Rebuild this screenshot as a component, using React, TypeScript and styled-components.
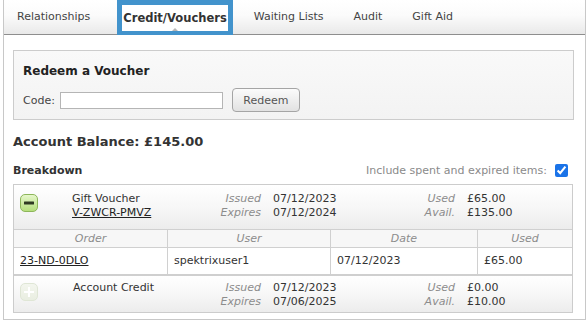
import React from "react";
import styled, { createGlobalStyle } from "styled-components";

const Global = createGlobalStyle`
  html, body { margin: 0; padding: 0; background: #fff; }
  body { font-family: "DejaVu Sans", Verdana, sans-serif; font-size: 11px; color: #333; }
  * { box-sizing: border-box; }
`;

const Frame = styled.div`
  margin-left: 3px;
  width: 583px;
  height: 320px;
  border-left: 1px solid #c8c8c8;
  border-right: 1px solid #c8c8c8;
  border-bottom: 1px solid #c8c8c8;
  overflow: hidden;
`;

const TabBar = styled.div`
  display: flex;
  align-items: stretch;
  height: 35px;
  padding-bottom: 1px;
  background: linear-gradient(#ffffff 0%, #fbfbfb 45%, #e9e9e9 100%);
  border-bottom: 1px solid #8e8e8e;
`;

const Tab = styled.div<{ $active?: boolean; $pad?: number }>`
  display: flex;
  align-items: center;
  padding: ${(p) => (p.$active ? "0 1px" : `0 ${p.$pad ?? 13}px`)};
  margin: ${(p) => (p.$active ? "0 7px -2px 14px" : "0")};
  font-weight: ${(p) => (p.$active ? "bold" : "normal")};
  font-size: ${(p) => (p.$active ? "11.5px" : "11px")};
  color: ${(p) => (p.$active ? "#333" : "#444")};
  position: relative;
  white-space: nowrap;
  ${(p) =>
    p.$active &&
    `
    background: #fff;
    border: 5px solid #4293cc;
    border-bottom-width: 4px;
    padding-bottom: 1px;
  `}
`;

const Caret = styled.span`
  position: absolute;
  left: 50%;
  bottom: 0px;
  transform: translateX(-50%);
  width: 0;
  height: 0;
  border-left: 3px solid transparent;
  border-right: 3px solid transparent;
  border-bottom: 3px solid #b5b5b5;
`;

const Content = styled.div`
  padding: 15px 11px 0 9px;
  display: flex;
  flex-direction: column;
`;

const RedeemBox = styled.div`
  border: 1px solid #cccccc;
  background: linear-gradient(#f9f9f9, #f3f3f3);
  height: 70px;
  padding: 12px 9px 0 9px;
  display: flex;
  flex-direction: column;
  gap: 9px;
`;

const BoxTitle = styled.div`
  font-weight: bold;
  font-size: 12px;
  color: #222;
  line-height: 16px;
`;

const CodeRow = styled.div`
  display: flex;
  align-items: center;
  color: #444;
`;

const CodeInput = styled.input`
  margin: 0 0 0 5px;
  width: 163px;
  height: 17px;
  border: 1px solid #b5b5b5;
  background: #fff;
  padding: 0 3px;
`;

const Button = styled.button`
  margin-left: 9px;
  width: 68px;
  height: 24px;
  border: 1px solid #a5a5a5;
  border-radius: 4px;
  background: linear-gradient(#fbfbfb, #e2e2e2);
  font-family: "DejaVu Sans", Verdana, sans-serif;
  font-size: 11px;
  color: #555;
  padding: 0;
`;

const Balance = styled.div`
  margin-top: 14px;
  font-size: 13px;
  font-weight: bold;
  color: #333;
  line-height: 16px;
`;

const BreakdownRow = styled.div`
  margin-top: 13px;
  display: flex;
  justify-content: space-between;
  align-items: center;
  height: 14px;
`;

const SubTitle = styled.div`
  font-weight: bold;
  font-size: 11px;
  color: #333;
`;

const Include = styled.label`
  display: flex;
  align-items: center;
  gap: 8px;
  color: #8a8a8a;
  padding-right: 6px;
`;

const Check = styled.input`
  margin: 0;
  width: 13px;
  height: 13px;
  accent-color: #1a73e8;
`;

const Table = styled.div`
  margin-top: 7px;
  border: 1px solid #cccccc;
  width: 560px;
`;

const ItemRow = styled.div<{ $h: number }>`
  display: grid;
  grid-template-columns: 58px 120px 69px 110px 84px 1fr;
  height: ${(p) => p.$h}px;
  padding-top: ${(p) => (p.$h > 40 ? 7 : 5)}px;
  background: linear-gradient(#ffffff 0%, #f7f7f7 50%, #ececec 100%);
  line-height: 14px;
`;

const IconCell = styled.div<{ $top?: number }>`
  padding: ${(p) => p.$top ?? 2}px 0 0 6px;
`;

const Stack = styled.div<{ $right?: boolean; $pad?: number }>`
  display: flex;
  flex-direction: column;
  align-items: ${(p) => (p.$right ? "flex-end" : "flex-start")};
  padding-left: ${(p) => p.$pad ?? 0}px;
  white-space: nowrap;
`;

const Label = styled.span`
  font-style: italic;
  color: #8c8c8c;
`;

const Value = styled.span`
  color: #333;
`;

const LinkText = styled.span`
  color: #222;
  text-decoration: underline;
`;

const ToggleBox = styled.div<{ $faded?: boolean }>`
  width: 18px;
  height: 18px;
  border-radius: 5px;
  border: 1px solid ${(p) => (p.$faded ? "#dfe6d5" : "#8db65a")};
  background: ${(p) =>
    p.$faded ? "linear-gradient(#f3f6ee, #e9eee1)" : "linear-gradient(#e6f7cb, #b5df7c)"};
  display: flex;
  align-items: center;
  justify-content: center;
`;

const SubTable = styled.div`
  display: grid;
  grid-template-columns: 154px 163px 147px 1fr;
  border-top: 1px solid #d0d0d0;
  border-bottom: 2px solid #cfcfcf;
`;

const HeadCell = styled.div<{ $last?: boolean }>`
  height: 18px;
  display: flex;
  align-items: center;
  justify-content: center;
  font-style: italic;
  color: #8c8c8c;
  background: #f7f7f7;
  border-right: ${(p) => (p.$last ? "none" : "1px solid #d0d0d0")};
  border-bottom: 1px solid #d0d0d0;
`;

const DataCell = styled.div<{ $last?: boolean }>`
  height: 26px;
  display: flex;
  align-items: center;
  padding: 0 0 2px 6px;
  color: #333;
  background: #fff;
  border-right: ${(p) => (p.$last ? "none" : "1px solid #d0d0d0")};
`;

const Minus = () => (
  <ToggleBox>
    <svg width="10" height="4" viewBox="0 0 10 4">
      <rect x="0" y="0.5" width="10" height="3" rx="0.5" fill="#2f3a22" />
    </svg>
  </ToggleBox>
);

const Plus = () => (
  <ToggleBox $faded>
    <svg width="10" height="10" viewBox="0 0 10 10">
      <rect x="0" y="4" width="10" height="2" fill="#ffffff" />
      <rect x="4" y="0" width="2" height="10" fill="#ffffff" />
    </svg>
  </ToggleBox>
);

const tabs: { t: string; pad?: number }[] = [
  { t: "Relationships" },
  { t: "Credit/Vouchers" },
  { t: "Waiting Lists", pad: 14 },
  { t: "Audit", pad: 16 },
  { t: "Gift Aid", pad: 14 },
];

export default function App() {
  return (
    <>
      <Global />
      <Frame>
        <TabBar>
          {tabs.map(({ t, pad }) => (
            <Tab key={t} $active={t === "Credit/Vouchers"} $pad={pad}>
              {t}
              {t === "Credit/Vouchers" && <Caret />}
            </Tab>
          ))}
        </TabBar>
        <Content>
          <RedeemBox>
            <BoxTitle>Redeem a Voucher</BoxTitle>
            <CodeRow>
              Code:
              <CodeInput type="text" />
              <Button>Redeem</Button>
            </CodeRow>
          </RedeemBox>
          <Balance>Account Balance: £145.00</Balance>
          <BreakdownRow>
            <SubTitle>Breakdown</SubTitle>
            <Include>
              Include spent and expired items:
              <Check type="checkbox" defaultChecked />
            </Include>
          </BreakdownRow>
          <Table>
            <ItemRow $h={44}>
              <IconCell>
                <Minus />
              </IconCell>
              <Stack>
                <Value>Gift Voucher</Value>
                <LinkText>V-ZWCR-PMVZ</LinkText>
              </Stack>
              <Stack $right>
                <Label>Issued</Label>
                <Label>Expires</Label>
              </Stack>
              <Stack $pad={12}>
                <Value>07/12/2023</Value>
                <Value>07/12/2024</Value>
              </Stack>
              <Stack $right>
                <Label>Used</Label>
                <Label>Avail.</Label>
              </Stack>
              <Stack $pad={12}>
                <Value>£65.00</Value>
                <Value>£135.00</Value>
              </Stack>
            </ItemRow>
            <SubTable>
              <HeadCell>Order</HeadCell>
              <HeadCell>User</HeadCell>
              <HeadCell>Date</HeadCell>
              <HeadCell $last>Used</HeadCell>
              <DataCell>
                <LinkText>23-ND-0DLO</LinkText>
              </DataCell>
              <DataCell>spektrixuser1</DataCell>
              <DataCell>07/12/2023</DataCell>
              <DataCell $last>£65.00</DataCell>
            </SubTable>
            <ItemRow $h={36}>
              <IconCell $top={2}>
                <Plus />
              </IconCell>
              <Stack $pad={1}>
                <Value>Account Credit</Value>
              </Stack>
              <Stack $right>
                <Label>Issued</Label>
                <Label>Expires</Label>
              </Stack>
              <Stack $pad={12}>
                <Value>07/12/2023</Value>
                <Value>07/06/2025</Value>
              </Stack>
              <Stack $right>
                <Label>Used</Label>
                <Label>Avail.</Label>
              </Stack>
              <Stack $pad={12}>
                <Value>£0.00</Value>
                <Value>£10.00</Value>
              </Stack>
            </ItemRow>
          </Table>
        </Content>
      </Frame>
    </>
  );
}
